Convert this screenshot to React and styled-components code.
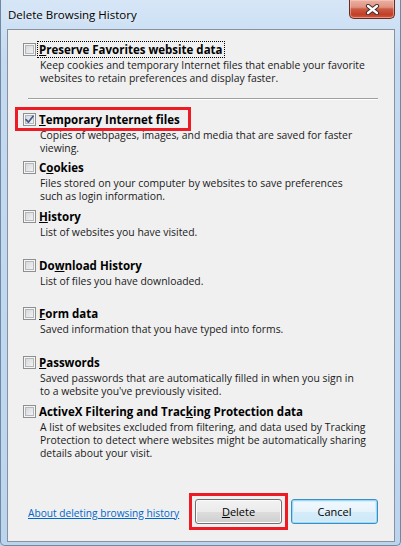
import styled, { createGlobalStyle, css } from 'styled-components'

const GlobalStyle = createGlobalStyle`
  html, body {
    margin: 0;
    padding: 0;
  }
  body {
    background: #bcd4ee;
    font-family: "Open Sans", "Noto Sans", sans-serif;
  }
`

// red annotation frame drawn over a control
const highlight = css`
  position: relative;
  &::after {
    content: '';
    position: absolute;
    box-sizing: border-box;
    border: 3px solid #ed1c24;
    pointer-events: none;
  }
`

const Window = styled.div`
  width: 401px;
  height: 546px;
  box-sizing: border-box;
  display: flex;
  flex-direction: column;
  padding: 0 5px 3px 6px;
  background: linear-gradient(to bottom, #d6e6f7 0, #c4daf1 60px, #bcd5ef 100%);
  border: 1px solid #7088a2;
  border-top: none;
  border-radius: 0 0 5px 5px;
`

const TitleBar = styled.div`
  height: 29px;
  flex: none;
  display: flex;
  justify-content: space-between;
  align-items: flex-start;
`

const Title = styled.div`
  padding: 6px 0 0 1px;
  font-size: 11.5px;
  line-height: 17px;
  color: #000;
  text-shadow: 0 0 6px rgba(255, 255, 255, 0.9);
`

const CloseButton = styled.div`
  width: 46px;
  height: 19px;
  box-sizing: border-box;
  display: flex;
  align-items: center;
  justify-content: center;
  border: 1px solid #6b2a1e;
  border-top: none;
  border-radius: 0 0 5px 5px;
  background: linear-gradient(to bottom, #eab1a4 0%, #e09381 40%, #cc5a44 50%, #c23f27 80%, #d0583f 100%);
  box-shadow: inset 0 0 0 1px rgba(255, 210, 200, 0.5);
`

const Panel = styled.div`
  flex: 1;
  display: flex;
  flex-direction: column;
  background: #f0f0f0;
  border: 1px solid #87929e;
  padding-top: 11px;
  color: #1a1a1a;
  font-size: 10.4px;
`

const Item = styled.div`
  height: 48.7px;
  padding-left: 15px;
  box-sizing: border-box;
`

const Head = styled.div`
  display: flex;
  align-items: center;
  width: fit-content;
  height: 17px;
  ${p => p.$marked && css`
    ${highlight}
    &::after {
      left: -8px;
      top: -4px;
      right: -9px;
      bottom: -3px;
    }
  `}
`

const Box = styled.span`
  width: 13px;
  height: 13px;
  box-sizing: border-box;
  margin-right: 1px;
  display: flex;
  align-items: center;
  justify-content: center;
  border: 1px solid #8e8f8f;
  background: linear-gradient(135deg, #cfd2d6 0%, #e8e9ea 60%, #fafafa 100%);
  box-shadow: inset 0 0 0 1px #f6f6f6, inset 0 0 0 2px #b4b8bc;
`

const Label = styled.span`
  padding: 0 2px;
  font-size: 11.5px;
  font-weight: 700;
  line-height: 17px;
  color: #000;
  outline: ${p => (p.$focused ? '1px dotted #000' : 'none')};
  outline-offset: -1px;
`

const Desc = styled.div`
  padding-left: 17px;
  line-height: 13px;
  margin-top: 1px;
`

const Separator = styled.div`
  height: 1px;
  margin: 8px 16px 11px 20px;
  background: #a0a0a0;
  border-bottom: 1px solid #fff;
`

const Footer = styled.div`
  margin-top: auto;
  display: flex;
  align-items: center;
  justify-content: space-between;
  padding: 0 16px 17px 20px;
`

const HelpLink = styled.a`
  color: #0066cc;
  text-decoration: underline;
  font-size: 10.2px;
  line-height: 15px;
  margin-top: 3px;
`

const Buttons = styled.div`
  display: flex;
  gap: 9px;
`

const Button = styled.button`
  width: 87px;
  height: 25px;
  padding: 0;
  font-family: inherit;
  font-size: 11px;
  color: #000;
  border-radius: 3px;
  border: 1px solid #707070;
  background: linear-gradient(to bottom, #f2f2f2 0%, #ebebeb 50%, #dddddd 51%, #cfcfcf 100%);
  box-shadow: inset 0 0 0 1px #fbfbfb;
  ${p => p.$default && css`
    border-color: #3c8fc6;
    background: linear-gradient(to bottom, #f3f9fd 0%, #e6f3fb 50%, #d6edf9 51%, #cce8f7 100%);
    box-shadow: inset 0 0 0 1px #9ad9f6, inset 0 0 0 2px #d5eefb;
  `}
  ${p => p.$marked && css`
    ${highlight}
    &::after {
      inset: -7px;
    }
  `}
`

function Check() {
  return (
    <svg width="9" height="9" viewBox="0 0 9 9">
      <path d="M1 4.6 L3.4 7.2 L8 1.2" fill="none" stroke="#44588f" strokeWidth="1.7" strokeLinecap="round" strokeLinejoin="round" />
    </svg>
  )
}

function CloseGlyph() {
  return (
    <svg width="15" height="11" viewBox="0 0 15 11">
      <path d="M3 2 L12 9 M12 2 L3 9" stroke="#3b2b2b" strokeWidth="4.2" strokeLinecap="round" />
      <path d="M3 2 L12 9 M12 2 L3 9" stroke="#fff" strokeWidth="2.3" strokeLinecap="round" />
    </svg>
  )
}

const items = [
  {
    label: <><u>P</u>reserve Favorites website data</>,
    desc: ['Keep cookies and temporary Internet files that enable your favorite', 'websites to retain preferences and display faster.'],
    focused: true,
  },
  {
    label: <><u>T</u>emporary Internet files</>,
    desc: ['Copies of webpages, images, and media that are saved for faster', 'viewing.'],
    checked: true,
    marked: true,
  },
  {
    label: <>C<u>o</u>okies</>,
    desc: ['Files stored on your computer by websites to save preferences', 'such as login information.'],
  },
  {
    label: <><u>H</u>istory</>,
    desc: ['List of websites you have visited.'],
  },
  {
    label: <>Do<u>w</u>nload History</>,
    desc: ['List of files you have downloaded.'],
  },
  {
    label: <><u>F</u>orm data</>,
    desc: ['Saved information that you have typed into forms.'],
  },
  {
    label: <><u>P</u>asswords</>,
    desc: ['Saved passwords that are automatically filled in when you sign in', "to a website you've previously visited."],
  },
  {
    label: <>ActiveX Filtering and Trac<u>k</u>ing Protection data</>,
    desc: ['A list of websites excluded from filtering, and data used by Tracking', 'Protection to detect where websites might be automatically sharing', 'details about your visit.'],
  },
]

function Option({ item }) {
  return (
    <Item>
      <Head $marked={item.marked}>
        <Box>{item.checked && <Check />}</Box>
        <Label $focused={item.focused}>{item.label}</Label>
      </Head>
      <Desc>
        {item.desc.map(line => <div key={line}>{line}</div>)}
      </Desc>
    </Item>
  )
}

export default function App() {
  return (
    <>
      <GlobalStyle />
      <Window>
        <TitleBar>
          <Title>Delete Browsing History</Title>
          <CloseButton><CloseGlyph /></CloseButton>
        </TitleBar>
        <Panel>
          <Option item={items[0]} />
          <Separator />
          {items.slice(1).map((item, i) => <Option key={i} item={item} />)}
          <Footer>
            <HelpLink href="#">About deleting browsing history</HelpLink>
            <Buttons>
              <Button $marked><u>D</u>elete</Button>
              <Button $default>Cancel</Button>
            </Buttons>
          </Footer>
        </Panel>
      </Window>
    </>
  )
}
